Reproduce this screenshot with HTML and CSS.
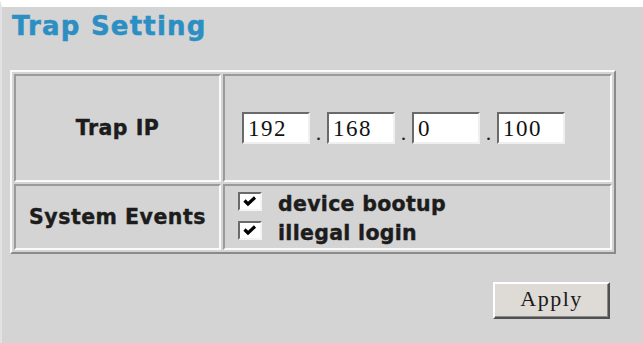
FILE: index.html
```html
<!DOCTYPE html>
<html lang="en">
<head>
<meta charset="utf-8">
<title>Trap Setting</title>
<link rel="stylesheet" href="styles.css">
</head>
<body>
<div class="page">
  <h1 class="title">Trap Setting</h1>
  <table class="trap">
    <tr class="row-ip">
      <th class="label">Trap IP</th>
      <td class="field">
        <div class="ip">
          <input class="octet" type="text" value="192"><span class="dot">.</span><input class="octet" type="text" value="168"><span class="dot">.</span><input class="octet" type="text" value="0"><span class="dot">.</span><input class="octet" type="text" value="100">
        </div>
      </td>
    </tr>
    <tr class="row-events">
      <th class="label">System Events</th>
      <td class="field events">
        <label class="check">
          <span class="box"><svg viewBox="0 0 20 15" width="20" height="15"><polyline points="4.5,6.5 8,10 15,3.5" fill="none" stroke="#000" stroke-width="3.2"/></svg></span>
          <span class="check-text">device bootup</span>
        </label>
        <label class="check">
          <span class="box"><svg viewBox="0 0 20 15" width="20" height="15"><polyline points="4.5,6.5 8,10 15,3.5" fill="none" stroke="#000" stroke-width="3.2"/></svg></span>
          <span class="check-text">illegal login</span>
        </label>
      </td>
    </tr>
  </table>
  <div class="actions">
    <button class="apply" type="button">Apply</button>
  </div>
</div>
</body>
</html>
```

FILE: styles.css
```css
html, body {
  margin: 0;
  padding: 0;
}

body {
  background: #d4d4d4;
  border-top: 7px solid #ffffff;
  border-left: 2px solid #e2e2e2;
  min-height: 336px;
}

.page {
  padding: 0 0 0 8px;
}

.title {
  margin: 4px 0 29px 2px;
  font: bold 26px/30px "DejaVu Sans", sans-serif;
  letter-spacing: 1.2px;
  color: #2b8fc4;
  -webkit-text-stroke: 0.5px #2b8fc4;
}

.trap {
  width: 606px;
  border-collapse: separate;
  border-spacing: 2px;
  border: 2px solid;
  border-color: #fafafa #8a8a8a #8a8a8a #fafafa;
}

.trap th,
.trap td {
  box-sizing: border-box;
  border: 2px solid;
  border-color: #9a9a9a #fafafa #fafafa #9a9a9a;
  padding: 0;
}

.label {
  width: 207px;
  padding-left: 1px;
  text-align: center;
  vertical-align: middle;
  font: bold 20.5px "DejaVu Sans", sans-serif;
  letter-spacing: 0.5px;
  color: #1c1c1c;
  -webkit-text-stroke: 0.4px #1c1c1c;
}

.row-ip th,
.row-ip td {
  height: 108px;
}

.row-events th,
.row-events td {
  height: 66px;
}

.trap .field {
  padding-left: 13px;
  vertical-align: middle;
}

.ip {
  display: flex;
  align-items: flex-end;
  margin-left: 4px;
}

.octet {
  width: 68px;
  height: 32px;
  box-sizing: border-box;
  margin: 0;
  padding: 2px 0 0 4px;
  border: 2px solid;
  border-color: #6a6a6a #f0f0f0 #f0f0f0 #6a6a6a;
  background: #ffffff;
  font: 23px "Liberation Serif", serif;
  letter-spacing: 1.5px;
  color: #111111;
}

.dot {
  width: 17px;
  text-align: center;
  font: 22px/1 "Liberation Serif", serif;
  color: #222222;
}

.trap .events {
  vertical-align: top;
  padding-top: 4px;
}

.check {
  display: flex;
  align-items: flex-start;
  height: 29px;
}

.box {
  width: 24px;
  height: 19px;
  box-sizing: border-box;
  margin: 2px 16px 0 0;
  border: 2px solid;
  border-color: #6a6a6a #f4f4f4 #f4f4f4 #6a6a6a;
  background: #ffffff;
  display: flex;
  align-items: center;
  justify-content: center;
}

.box svg {
  display: block;
}

.check-text {
  font: bold 20.5px/29px "DejaVu Sans", sans-serif;
  letter-spacing: 0.3px;
  color: #1c1c1c;
  -webkit-text-stroke: 0.4px #1c1c1c;
}

.actions {
  width: 606px;
  box-sizing: border-box;
  display: flex;
  justify-content: flex-end;
  padding-right: 6px;
  margin-top: 28px;
}

.apply {
  width: 117px;
  height: 37px;
  margin: 0;
  padding: 0 0 3px 0;
  border: 2px solid;
  border-color: #ffffff #505050 #505050 #ffffff;
  box-shadow: inset -1px -1px #8a8a8a;
  background: #dedad6;
  font: 22px "Liberation Serif", serif;
  letter-spacing: 1.5px;
  color: #1a1a1a;
}
```
